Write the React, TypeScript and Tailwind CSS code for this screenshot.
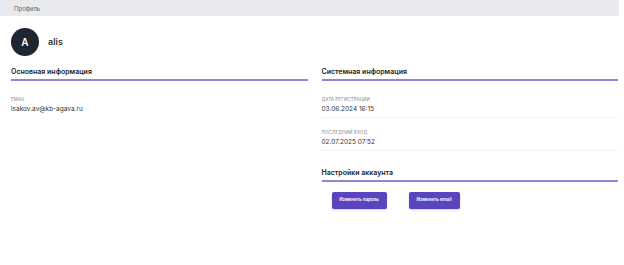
import React from 'react';

const SectionTitle: React.FC<{ title: string }> = ({ title }) => (
  <div className="border-b-2 border-[#8f86d6] pb-[3px]">
    <h2 className="text-[7px] leading-[9px] font-semibold text-[#222]">{title}</h2>
  </div>
);

const Field: React.FC<{ label: string; value: string; divider?: boolean }> = ({ label, value, divider }) => (
  <div className={divider ? 'border-b border-[#f0f0f2] pb-[4px]' : ''}>
    <div className="text-[4.5px] leading-[6px] uppercase text-[#888] tracking-wide">{label}</div>
    <div className="mt-[2px] text-[6.5px] leading-[8px] text-[#333]">{value}</div>
  </div>
);

export default function App() {
  return (
    <div className="w-[624px] h-[265px] bg-white font-['Inter',sans-serif] overflow-hidden">
      <div className="w-[619px] h-[16px] bg-[#e9eaee] flex items-center pl-[14px]">
        <span className="text-[6px] text-[#666]">Профиль</span>
      </div>

      <div className="pl-[11px] pr-[6px]">
        <div className="mt-[12px] flex items-center gap-[9px]">
          <div className="w-[28px] h-[28px] rounded-full bg-[#1f2531] flex items-center justify-center">
            <span className="text-white text-[10px] font-semibold">A</span>
          </div>
          <span className="text-[9px] font-semibold text-[#333]">alis</span>
        </div>

        <div className="mt-[11px] grid grid-cols-2 gap-[14px]">
          <div>
            <SectionTitle title="Основная информация" />
            <div className="mt-[16px]">
              <Field label="Email" value="isakov.av@kb-agava.ru" />
            </div>
          </div>

          <div>
            <SectionTitle title="Системная информация" />
            <div className="mt-[16px] flex flex-col gap-[12px]">
              <Field label="Дата регистрации" value="03.06.2024 16:15" divider />
              <Field label="Последний вход" value="02.07.2025 07:52" divider />
            </div>

            <div className="mt-[17px]">
              <SectionTitle title="Настройки аккаунта" />
            </div>
            <div className="mt-[10px] flex gap-[22px] pl-[10px]">
              <button className="w-[55px] h-[17px] rounded-[2px] bg-[#5a45bf] text-white text-[4.5px] font-semibold shadow-[0_1px_2px_rgba(0,0,0,0.2)]">
                Изменить пароль
              </button>
              <button className="w-[51px] h-[17px] rounded-[2px] bg-[#5a45bf] text-white text-[4.5px] font-semibold shadow-[0_1px_2px_rgba(0,0,0,0.2)]">
                Изменить email
              </button>
            </div>
          </div>
        </div>
      </div>
    </div>
  );
}
